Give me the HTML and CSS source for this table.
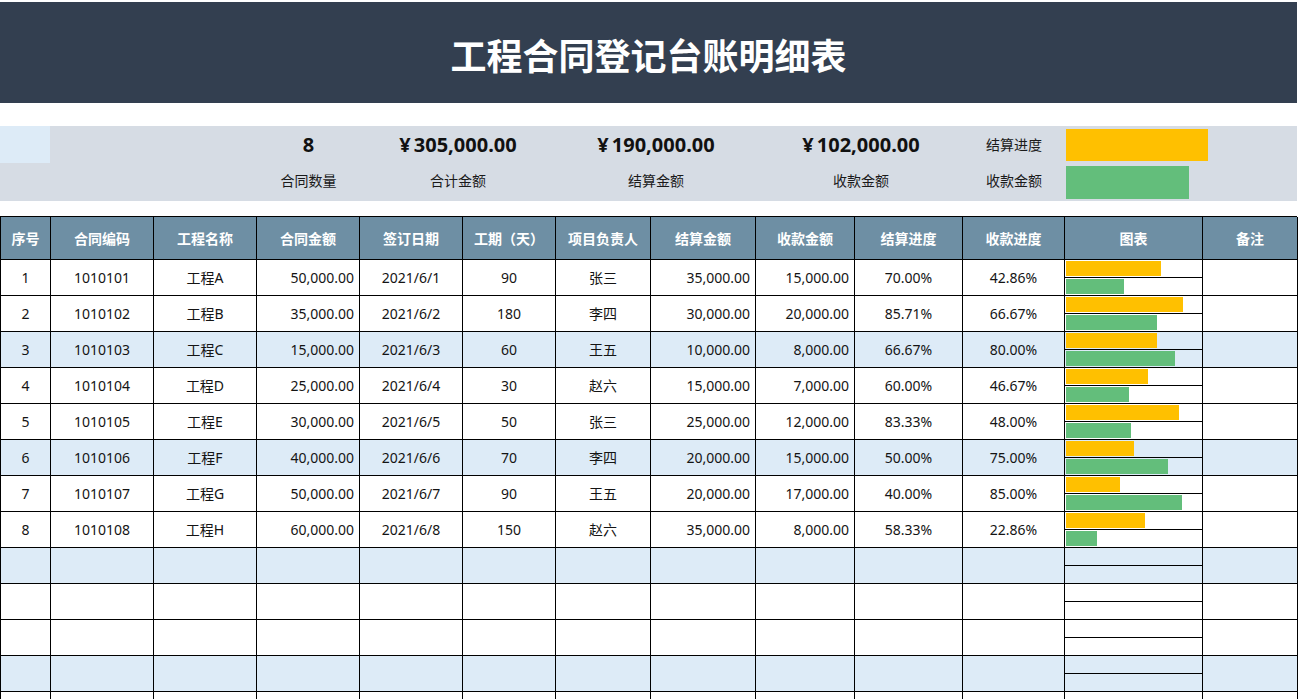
FILE: index.html
```html
<!DOCTYPE html>
<html lang="zh-CN">
<head>
<meta charset="utf-8">
<title>工程合同登记台账明细表</title>
<link rel="stylesheet" href="styles.css">
</head>
<body>
<div class="page">
  <header class="banner"><h1>工程合同登记台账明细表</h1></header>

  <section class="summary">
    <div class="s-blue"></div>
    <div class="s-val c4">8</div>
    <div class="s-val c56"><span class="yen">¥</span>305,000.00</div>
    <div class="s-val c78"><span class="yen">¥</span>190,000.00</div>
    <div class="s-val c910"><span class="yen">¥</span>102,000.00</div>
    <div class="s-lab c11 r1">结算进度</div>
    <div class="s-bar yellow"></div>
    <div class="s-lab c4 r2">合同数量</div>
    <div class="s-lab c56 r2">合计金额</div>
    <div class="s-lab c78 r2">结算金额</div>
    <div class="s-lab c910 r2">收款金额</div>
    <div class="s-lab c11 r2">收款金额</div>
    <div class="s-bar green"></div>
  </section>

  <section class="sheet">
    <div class="row head">
      <div class="c">序号</div><div class="c">合同编码</div><div class="c">工程名称</div><div class="c">合同金额</div><div class="c">签订日期</div><div class="c">工期（天）</div><div class="c">项目负责人</div><div class="c">结算金额</div><div class="c">收款金额</div><div class="c">结算进度</div><div class="c">收款进度</div><div class="c">图表</div><div class="c">备注</div>
    </div>

    <div class="row">
      <div class="c">1</div><div class="c">1010101</div><div class="c">工程A</div><div class="c num">50,000.00</div><div class="c">2021/6/1</div><div class="c">90</div><div class="c">张三</div><div class="c num">35,000.00</div><div class="c num">15,000.00</div><div class="c">70.00%</div><div class="c">42.86%</div>
      <div class="c chart"><div class="half top"><div class="track"><i class="bar y" style="width:70%"></i></div></div><div class="half"><div class="track"><i class="bar g" style="width:42.86%"></i></div></div></div><div class="c"></div>
    </div>
    <div class="row">
      <div class="c">2</div><div class="c">1010102</div><div class="c">工程B</div><div class="c num">35,000.00</div><div class="c">2021/6/2</div><div class="c">180</div><div class="c">李四</div><div class="c num">30,000.00</div><div class="c num">20,000.00</div><div class="c">85.71%</div><div class="c">66.67%</div>
      <div class="c chart"><div class="half top"><div class="track"><i class="bar y" style="width:85.71%"></i></div></div><div class="half"><div class="track"><i class="bar g" style="width:66.67%"></i></div></div></div><div class="c"></div>
    </div>
    <div class="row alt">
      <div class="c">3</div><div class="c">1010103</div><div class="c">工程C</div><div class="c num">15,000.00</div><div class="c">2021/6/3</div><div class="c">60</div><div class="c">王五</div><div class="c num">10,000.00</div><div class="c num">8,000.00</div><div class="c">66.67%</div><div class="c">80.00%</div>
      <div class="c chart"><div class="half top"><div class="track"><i class="bar y" style="width:66.67%"></i></div></div><div class="half"><div class="track"><i class="bar g" style="width:80%"></i></div></div></div><div class="c"></div>
    </div>
    <div class="row">
      <div class="c">4</div><div class="c">1010104</div><div class="c">工程D</div><div class="c num">25,000.00</div><div class="c">2021/6/4</div><div class="c">30</div><div class="c">赵六</div><div class="c num">15,000.00</div><div class="c num">7,000.00</div><div class="c">60.00%</div><div class="c">46.67%</div>
      <div class="c chart"><div class="half top"><div class="track"><i class="bar y" style="width:60%"></i></div></div><div class="half"><div class="track"><i class="bar g" style="width:46.67%"></i></div></div></div><div class="c"></div>
    </div>
    <div class="row">
      <div class="c">5</div><div class="c">1010105</div><div class="c">工程E</div><div class="c num">30,000.00</div><div class="c">2021/6/5</div><div class="c">50</div><div class="c">张三</div><div class="c num">25,000.00</div><div class="c num">12,000.00</div><div class="c">83.33%</div><div class="c">48.00%</div>
      <div class="c chart"><div class="half top"><div class="track"><i class="bar y" style="width:83.33%"></i></div></div><div class="half"><div class="track"><i class="bar g" style="width:48%"></i></div></div></div><div class="c"></div>
    </div>
    <div class="row alt">
      <div class="c">6</div><div class="c">1010106</div><div class="c">工程F</div><div class="c num">40,000.00</div><div class="c">2021/6/6</div><div class="c">70</div><div class="c">李四</div><div class="c num">20,000.00</div><div class="c num">15,000.00</div><div class="c">50.00%</div><div class="c">75.00%</div>
      <div class="c chart"><div class="half top"><div class="track"><i class="bar y" style="width:50%"></i></div></div><div class="half"><div class="track"><i class="bar g" style="width:75%"></i></div></div></div><div class="c"></div>
    </div>
    <div class="row">
      <div class="c">7</div><div class="c">1010107</div><div class="c">工程G</div><div class="c num">50,000.00</div><div class="c">2021/6/7</div><div class="c">90</div><div class="c">王五</div><div class="c num">20,000.00</div><div class="c num">17,000.00</div><div class="c">40.00%</div><div class="c">85.00%</div>
      <div class="c chart"><div class="half top"><div class="track"><i class="bar y" style="width:40%"></i></div></div><div class="half"><div class="track"><i class="bar g" style="width:85%"></i></div></div></div><div class="c"></div>
    </div>
    <div class="row">
      <div class="c">8</div><div class="c">1010108</div><div class="c">工程H</div><div class="c num">60,000.00</div><div class="c">2021/6/8</div><div class="c">150</div><div class="c">赵六</div><div class="c num">35,000.00</div><div class="c num">8,000.00</div><div class="c">58.33%</div><div class="c">22.86%</div>
      <div class="c chart"><div class="half top"><div class="track"><i class="bar y" style="width:58.33%"></i></div></div><div class="half"><div class="track"><i class="bar g" style="width:22.86%"></i></div></div></div><div class="c"></div>
    </div>

    <div class="row alt">
      <div class="c"></div><div class="c"></div><div class="c"></div><div class="c"></div><div class="c"></div><div class="c"></div><div class="c"></div><div class="c"></div><div class="c"></div><div class="c"></div><div class="c"></div>
      <div class="c chart"><div class="half top"></div><div class="half"></div></div><div class="c"></div>
    </div>
    <div class="row">
      <div class="c"></div><div class="c"></div><div class="c"></div><div class="c"></div><div class="c"></div><div class="c"></div><div class="c"></div><div class="c"></div><div class="c"></div><div class="c"></div><div class="c"></div>
      <div class="c chart"><div class="half top"></div><div class="half"></div></div><div class="c"></div>
    </div>
    <div class="row">
      <div class="c"></div><div class="c"></div><div class="c"></div><div class="c"></div><div class="c"></div><div class="c"></div><div class="c"></div><div class="c"></div><div class="c"></div><div class="c"></div><div class="c"></div>
      <div class="c chart"><div class="half top"></div><div class="half"></div></div><div class="c"></div>
    </div>
    <div class="row alt">
      <div class="c"></div><div class="c"></div><div class="c"></div><div class="c"></div><div class="c"></div><div class="c"></div><div class="c"></div><div class="c"></div><div class="c"></div><div class="c"></div><div class="c"></div>
      <div class="c chart"><div class="half top"></div><div class="half"></div></div><div class="c"></div>
    </div>
    <div class="row">
      <div class="c"></div><div class="c"></div><div class="c"></div><div class="c"></div><div class="c"></div><div class="c"></div><div class="c"></div><div class="c"></div><div class="c"></div><div class="c"></div><div class="c"></div>
      <div class="c chart"><div class="half top"></div><div class="half"></div></div><div class="c"></div>
    </div>
  </section>
</div>
</body>
</html>
```
FILE: styles.css
```css
html, body {
  margin: 0;
  padding: 0;
  overflow: hidden;
  background: #ffffff;
}
body {
  font-family: "Noto Sans", "Noto Sans CJK SC", sans-serif;
  color: #141414;
}
.page {
  width: 1297px;
  padding-top: 2px;
}
.banner {
  height: 101px;
  background: #333f50;
  display: flex;
  align-items: center;
  justify-content: center;
  padding-top: 2px;
  box-sizing: border-box;
}
.banner h1 {
  margin: 0;
  color: #ffffff;
  font-family: "Noto Sans CJK SC", sans-serif;
  font-size: 36px;
  font-weight: 700;
  line-height: 1;
}

/* summary band */
.summary {
  margin-top: 23px;
  height: 75px;
  background: #d6dce4;
  display: grid;
  grid-template-columns: 51px 103px 103px 103px 103px 93px 95px 105px 99px 108px 102px 138px 95px;
  grid-template-rows: 37px 38px;
}
.s-blue {
  grid-column: 1 / 2;
  grid-row: 1;
  width: 50px;
  background: #ddebf7;
}
.s-val {
  grid-row: 1;
  display: flex;
  align-items: center;
  justify-content: center;
  font-size: 20px;
  font-weight: 700;
  color: #111;
  line-height: 1;
}
.yen {
  margin-right: 3px;
}
.s-lab {
  display: flex;
  align-items: center;
  justify-content: center;
  font-size: 14px;
  color: #1a1a1a;
  line-height: 1;
}
.r1 { grid-row: 1; }
.r2 { grid-row: 2; padding-bottom: 2px; }
.c4 { grid-column: 4 / 5; }
.c56 { grid-column: 5 / 7; }
.c78 { grid-column: 7 / 9; }
.c910 { grid-column: 9 / 11; padding-left: 3px; }
.c11 { grid-column: 11 / 12; }
.s-bar {
  grid-column: 12 / 13;
  align-self: center;
  margin-left: 1px;
}
.s-bar.yellow {
  grid-row: 1;
  width: 142px;
  height: 32px;
  background: #ffc000;
}
.s-bar.green {
  grid-row: 2;
  width: 123px;
  height: 33px;
  background: #63be7b;
}

/* table */
.sheet {
  margin-top: 15px;
  border-top: 1px solid #000;
  display: grid;
  grid-template-columns: 51px 103px 103px 103px 103px 93px 95px 105px 99px 108px 102px 138px 95px;
  grid-template-rows: 43px;
  grid-auto-rows: 36px;
}
.row {
  display: contents;
}
.c {
  box-sizing: border-box;
  border-right: 1px solid #000;
  border-bottom: 1px solid #000;
  display: flex;
  align-items: center;
  justify-content: center;
  font-size: 14px;
  line-height: 1;
  white-space: nowrap;
  background: #ffffff;
}
.row > .c:first-child {
  border-left: 1px solid #000;
}
.row.alt > .c {
  background: #ddebf7;
}
.head > .c {
  background: #6e8fa4;
  color: #ffffff;
  font-weight: 700;
  font-family: "Noto Sans CJK SC", sans-serif;
}
.num {
  justify-content: flex-end;
  padding-right: 5px;
}
.chart {
  flex-direction: column;
  align-items: stretch;
  justify-content: flex-start;
}
.half {
  height: 17px;
  display: flex;
  align-items: center;
}
.half.top {
  height: 18px;
  box-sizing: border-box;
  border-bottom: 1px solid #000;
}
.track {
  width: 136px;
  margin-left: 1px;
  height: 15px;
}
.bar {
  display: block;
  height: 15px;
}
.bar.y { background: #ffc000; }
.bar.g { background: #63be7b; }
```
